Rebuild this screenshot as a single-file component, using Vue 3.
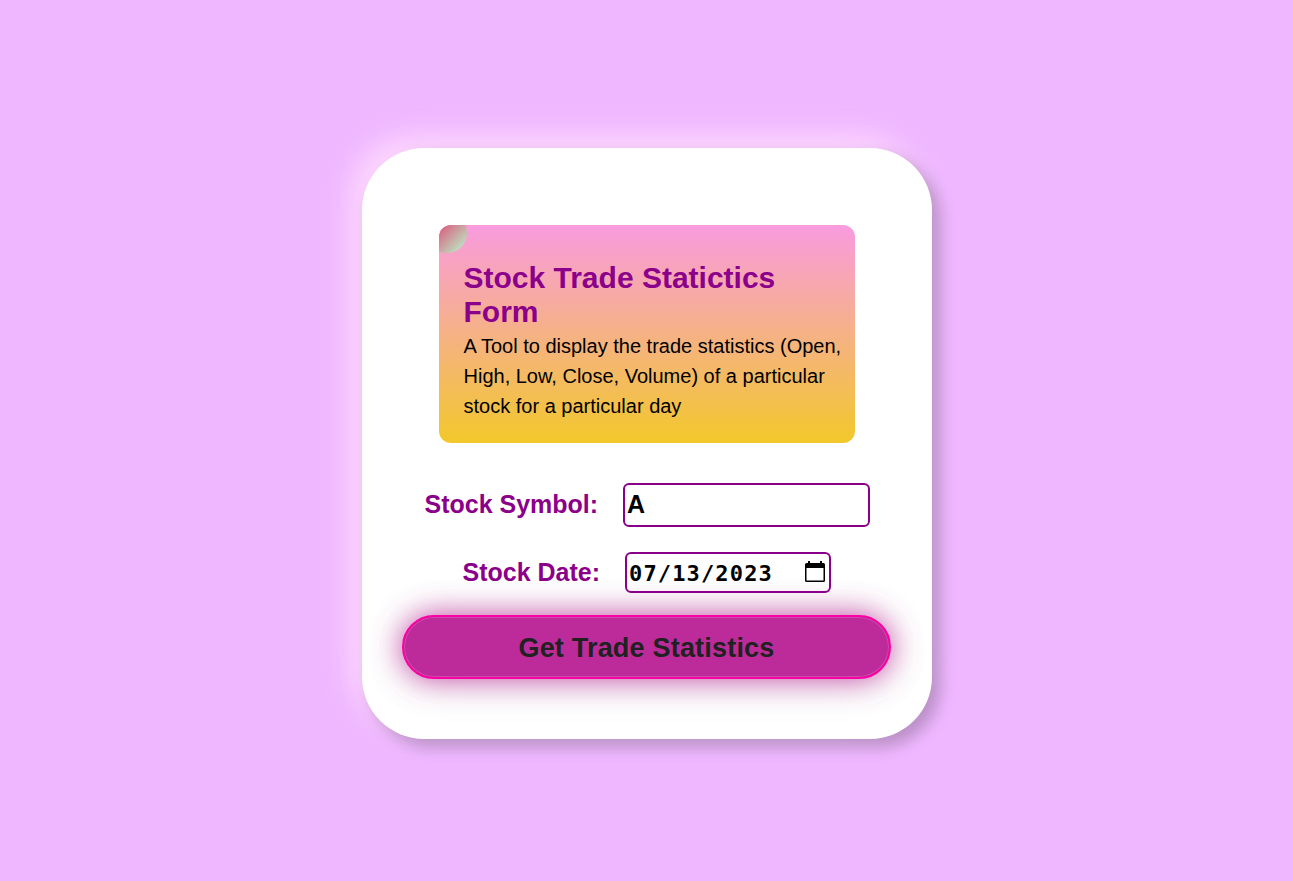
<script setup>
import { ref } from 'vue'

const symbol = ref('A')
const date = ref('07/13/2023')
</script>

<template>
  <main class="page">
    <form class="card" @submit.prevent>
      <header class="intro">
        <h1>Stock Trade Statictics Form</h1>
        <p>A Tool to display the trade statistics (Open, High, Low, Close, Volume) of a particular stock for a particular day</p>
      </header>
      <div class="row symbol-row">
        <label for="symbol">Stock Symbol:</label>
        <input id="symbol" v-model="symbol" class="symbol" type="text" />
      </div>
      <div class="row date-row">
        <label>Stock Date:</label>
        <div class="date">
          <span>{{ date }}</span>
          <svg width="20" height="22" viewBox="0 0 20 22">
            <path fill-rule="evenodd" d="M3 0h2v2h10V0h2v2h1.500a1.500 1.500 0 0 1 1.500 1.500v16a1.500 1.500 0 0 1-1.500 1.500h-17A1.500 1.500 0 0 1 0 19.500v-16A1.500 1.500 0 0 1 1.500 2H3zM1.500 7v12.500h17V7z" />
          </svg>
        </div>
      </div>
      <button type="submit">Get Trade Statistics</button>
    </form>
  </main>
</template>

<style>
body {
  margin: 0;
  background: #efb7ff;
}
</style>

<style scoped>
.page {
  box-sizing: border-box;
  height: 881px;
  padding-top: 148px;
  overflow: hidden;
  background: #efb7ff;
  font-family: "Liberation Sans", Arial, sans-serif;
}
.card {
  box-sizing: border-box;
  width: 570px;
  height: 591px;
  margin-left: 362px;
  padding: 77px 40px 0;
  border-radius: 62px;
  background: #fff;
  box-shadow: 8px 8px 16px rgba(0, 0, 0, 0.23), -12px -12px 30px #fed8fe;
}
.intro {
  box-sizing: border-box;
  position: relative;
  overflow: hidden;
  width: 416px;
  height: 218px;
  margin: 0 37px 40px;
  padding: 36px 10px 0 24.5px;
  border-radius: 12px;
  background: linear-gradient(#f99bdf, #f2c82b);
}
.intro::before {
  content: "";
  position: absolute;
  top: -12px;
  left: -12px;
  width: 40px;
  height: 40px;
  border-radius: 50%;
  background: linear-gradient(135deg, #e04070 20%, #bde0c0 88%);
}
h1 {
  margin: 0;
  color: #8b008b;
  font-size: 30px;
  line-height: 34px;
}
p {
  margin: 2px 0 0;
  color: #000;
  font-size: 20px;
  line-height: 30px;
}
.row {
  display: flex;
  align-items: center;
}
label {
  color: #8b008b;
  font-size: 25px;
  font-weight: bold;
  white-space: nowrap;
}
.symbol-row {
  height: 44px;
  padding-left: 22.5px;
}
.symbol-row label {
  width: 198.5px;
  padding-bottom: 2px;
}
.symbol,
.date {
  box-sizing: border-box;
  border: 2px solid #8b008b;
  border-radius: 6px;
  background: #fff;
  color: #000;
  font-weight: bold;
}
.symbol {
  width: 247px;
  height: 44px;
  padding: 0 2px 2px;
  font-family: inherit;
  font-size: 25px;
  outline: none;
}
.date-row {
  height: 41px;
  margin-top: 25px;
  padding-left: 60.5px;
}
.date-row label {
  width: 162.5px;
}
.date {
  display: flex;
  align-items: center;
  justify-content: space-between;
  width: 206px;
  height: 41px;
  padding: 0 4px 0 2px;
  background: transparent;
  font-family: "DejaVu Sans Mono", monospace;
  font-size: 22px;
  letter-spacing: 1.15px;
}
.date span {
  padding-top: 2px;
}
.date svg {
  margin-bottom: 2px;
}
button {
  display: block;
  box-sizing: border-box;
  width: 489px;
  height: 64px;
  margin: 22px 0 0;
  padding: 2px 0 0;
  border: 2px solid #fb00a2;
  border-radius: 32px;
  background: #bd2b9a;
  box-shadow: 0 0 30px rgba(189, 43, 154, 0.85), 0 4px 50px rgba(0, 0, 0, 0.08), inset 0 0 0 1px #cb4cab;
  color: #212121;
  font-family: inherit;
  font-size: 27px;
  font-weight: bold;
  letter-spacing: 0.2px;
}
</style>
